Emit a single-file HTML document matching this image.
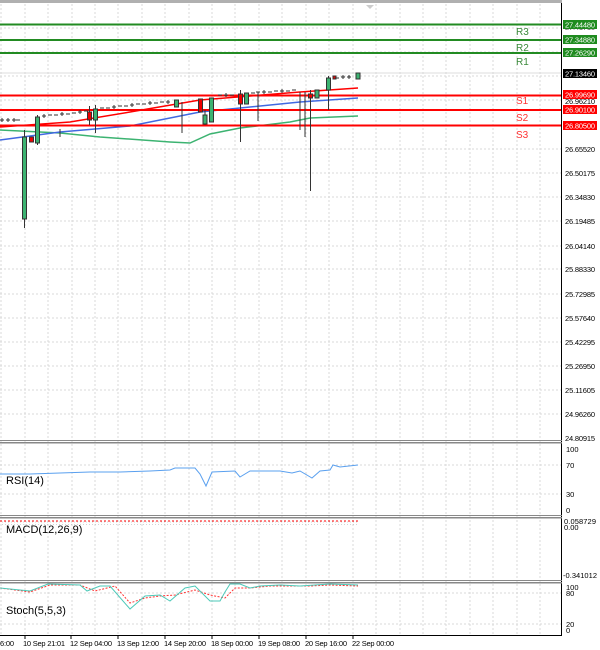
<!DOCTYPE html>
<html><head><meta charset="utf-8"><style>
html,body{margin:0;padding:0;background:#fff;}
svg{display:block;font-family:"Liberation Sans",sans-serif;}
.ax{font-size:7.5px;fill:#000;}
</style></head><body>
<svg width="600" height="650" viewBox="0 0 600 650" xmlns="http://www.w3.org/2000/svg">
<rect width="600" height="650" fill="#fff"/>
<rect x="0" y="0" width="562" height="3" fill="#b0b0b0"/>
<g stroke="#d8d8d8" stroke-dasharray="2,2" stroke-width="1">
<line x1="1" y1="4" x2="1" y2="635"/><line x1="25" y1="4" x2="25" y2="635"/><line x1="48" y1="4" x2="48" y2="635"/><line x1="72" y1="4" x2="72" y2="635"/><line x1="95" y1="4" x2="95" y2="635"/><line x1="118" y1="4" x2="118" y2="635"/><line x1="142" y1="4" x2="142" y2="635"/><line x1="165" y1="4" x2="165" y2="635"/><line x1="189" y1="4" x2="189" y2="635"/><line x1="212" y1="4" x2="212" y2="635"/><line x1="235" y1="4" x2="235" y2="635"/><line x1="259" y1="4" x2="259" y2="635"/><line x1="282" y1="4" x2="282" y2="635"/><line x1="306" y1="4" x2="306" y2="635"/><line x1="329" y1="4" x2="329" y2="635"/><line x1="353" y1="4" x2="353" y2="635"/><line x1="376" y1="4" x2="376" y2="635"/><line x1="400" y1="4" x2="400" y2="635"/><line x1="423" y1="4" x2="423" y2="635"/><line x1="446" y1="4" x2="446" y2="635"/><line x1="470" y1="4" x2="470" y2="635"/><line x1="493" y1="4" x2="493" y2="635"/><line x1="517" y1="4" x2="517" y2="635"/><line x1="540" y1="4" x2="540" y2="635"/>
<line x1="0" y1="28" x2="562" y2="28"/><line x1="0" y1="52" x2="562" y2="52"/><line x1="0" y1="76" x2="562" y2="76"/><line x1="0" y1="100" x2="562" y2="100"/><line x1="0" y1="125" x2="562" y2="125"/><line x1="0" y1="149" x2="562" y2="149"/><line x1="0" y1="173" x2="562" y2="173"/><line x1="0" y1="197" x2="562" y2="197"/><line x1="0" y1="221" x2="562" y2="221"/><line x1="0" y1="246" x2="562" y2="246"/><line x1="0" y1="269" x2="562" y2="269"/><line x1="0" y1="294" x2="562" y2="294"/><line x1="0" y1="318" x2="562" y2="318"/><line x1="0" y1="342" x2="562" y2="342"/><line x1="0" y1="366" x2="562" y2="366"/><line x1="0" y1="390" x2="562" y2="390"/><line x1="0" y1="414" x2="562" y2="414"/>
<line x1="0" y1="465" x2="562" y2="465"/><line x1="0" y1="494" x2="562" y2="494"/>
<line x1="0" y1="593" x2="562" y2="593"/><line x1="0" y1="624" x2="562" y2="624"/>
</g>
<polyline fill="none" stroke="#3cb371" stroke-width="1.5" points="0,130 60,133 100,137 170,142 190,143 210,134 240,128 290,122 310,118 358,116"/>
<polyline fill="none" stroke="#4169e1" stroke-width="1.5" points="0,140 60,132 130,126 200,112 300,102 358,98"/>
<polyline fill="none" stroke="#f00" stroke-width="1.5" points="0,127 70,122 130,112 200,100 300,92 358,88"/>
<g stroke-width="2">
<line x1="0" y1="24.5" x2="562" y2="24.5" stroke="#228b22"/><line x1="0" y1="40" x2="562" y2="40" stroke="#228b22"/><line x1="0" y1="53" x2="562" y2="53" stroke="#228b22"/>
<line x1="0" y1="95.5" x2="562" y2="95.5" stroke="#f00"/><line x1="0" y1="110" x2="562" y2="110" stroke="#f00"/><line x1="0" y1="125.5" x2="562" y2="125.5" stroke="#f00"/>
</g>
<line x1="0" y1="73" x2="562" y2="73" stroke="#ddd"/>
<g stroke="#333" stroke-width="1">
<line x1="24.5" y1="130" x2="24.5" y2="228"/><rect x="22.5" y="137" width="4" height="82" fill="#3cb371"/>
<rect x="29.5" y="137" width="4" height="5" fill="#e00"/>
<line x1="37.5" y1="115" x2="37.5" y2="145"/><rect x="35.5" y="117" width="4" height="26" fill="#3cb371"/>
<line x1="60" y1="129" x2="60" y2="137"/>
<line x1="89.5" y1="106" x2="89.5" y2="125"/><rect x="87.5" y="112" width="4" height="8" fill="#e00"/>
<line x1="95.5" y1="105" x2="95.5" y2="133"/><rect x="93.5" y="109" width="4" height="11" fill="#3cb371"/>
<line x1="182" y1="102" x2="182" y2="133"/><rect x="174.5" y="100" width="4" height="7" fill="#3cb371"/>
<rect x="198.5" y="99" width="4" height="13" fill="#e00"/>
<line x1="205" y1="110" x2="205" y2="125"/><rect x="203" y="115" width="4" height="9" fill="#3cb371"/>
<rect x="209.5" y="98" width="4" height="24" fill="#3cb371"/>
<line x1="240.5" y1="90" x2="240.5" y2="142"/><rect x="238.5" y="94" width="4" height="10" fill="#e00"/>
<rect x="244.5" y="93" width="4" height="11" fill="#3cb371"/>
<line x1="258" y1="92" x2="258" y2="121"/>
<line x1="300" y1="92" x2="300" y2="130"/><line x1="305" y1="92" x2="305" y2="137"/>
<line x1="310.5" y1="90" x2="310.5" y2="191"/><rect x="308.5" y="94" width="4" height="4" fill="#e00"/>
<rect x="315" y="90" width="4" height="8" fill="#3cb371"/>
<line x1="328.5" y1="76" x2="328.5" y2="110"/><rect x="326.5" y="78" width="4" height="12" fill="#3cb371"/>
<rect x="333" y="76" width="3" height="3" fill="#e00"/>
<rect x="356" y="73" width="4" height="6" fill="#3cb371"/>
</g>
<g stroke="#333" stroke-width="1">
<path d="M0 120h4M6 120h4M12 120h4M16 120h4M42 116h4M48 115h4M54 115h4M60 114h4M66 114h4M72 113h4M78 112h4M84 111h4M100 108h4M106 108h4M112 107h4M118 106h4M124 106h4M130 105h4M136 104h4M142 104h4M148 103h4M154 103h4M160 102h4M166 102h4M218 95h4M224 95h4M230 95h4M251 93h4M256 92h4M262 92h4M268 92h4M274 91h4M280 91h4M286 91h4M292 90h4M335 78h4M341 77h4M347 77h4"/>
<path d="M2 118v4M8 118v4M14 118v4M44 114v4M62 112v4M80 110v4M114 105v4M132 103v4M150 101v4M168 100v4M226 93v4M264 90v4M282 89v4M343 75v4M349 75v4"/>
</g>
<g font-size="10">
<text x="516" y="35" fill="#3a8a3a">R3</text><text x="516" y="51" fill="#3a8a3a">R2</text><text x="516" y="65" fill="#3a8a3a">R1</text>
<text x="516" y="104" fill="#f33">S1</text><text x="516" y="121" fill="#f33">S2</text><text x="516" y="138" fill="#f33">S3</text>
</g>
<line x1="561.5" y1="3" x2="561.5" y2="636" stroke="#000"/>
<g class="ax" lengthAdjust="spacingAndGlyphs">
<text x="565" y="30" fill="#555" textLength="30">27.41710</text>
<text x="565" y="77" fill="#555" textLength="30">27.11020</text>
<text x="565" y="104" textLength="30">26.96210</text>
<text x="565" y="152" textLength="30">26.65520</text><text x="565" y="176" textLength="30">26.50175</text><text x="565" y="200" textLength="30">26.34830</text><text x="565" y="224" textLength="30">26.19485</text><text x="565" y="249" textLength="30">26.04140</text><text x="565" y="272" textLength="30">25.88330</text><text x="565" y="297" textLength="30">25.72985</text><text x="565" y="321" textLength="30">25.57640</text><text x="565" y="345" textLength="30">25.42295</text><text x="565" y="369" textLength="30">25.26950</text><text x="565" y="393" textLength="30">25.11605</text><text x="565" y="417" textLength="30">24.96260</text><text x="565" y="441" textLength="30">24.80915</text>
</g>
<g font-size="7.5">
<rect x="563" y="20" width="34" height="9" fill="#1f8b1f"/><text x="565" y="27.5" fill="#fff" textLength="30">27.44480</text>
<rect x="563" y="35" width="34" height="9" fill="#1f8b1f"/><text x="565" y="42.5" fill="#fff" textLength="30">27.34880</text>
<rect x="563" y="48" width="34" height="9" fill="#1f8b1f"/><text x="565" y="55.5" fill="#fff" textLength="30">27.26290</text>
<rect x="563" y="69" width="34" height="9" fill="#000"/><text x="565" y="76.5" fill="#fff" textLength="30">27.13460</text>
<rect x="563" y="90" width="34" height="9" fill="#f00"/><text x="565" y="97.5" fill="#fff" textLength="30">26.99690</text>
<rect x="563" y="105" width="34" height="9" fill="#f00"/><text x="565" y="112.5" fill="#fff" textLength="30">26.90100</text>
<rect x="563" y="121" width="34" height="9" fill="#f00"/><text x="565" y="128.5" fill="#fff" textLength="30">26.80500</text>
</g>
<g fill="#888"><rect x="0" y="440" width="562" height="1"/><rect x="0" y="442" width="562" height="1.5"/>
<rect x="0" y="515" width="562" height="1"/><rect x="0" y="517" width="562" height="1.5"/>
<rect x="0" y="580" width="562" height="1"/><rect x="0" y="582" width="562" height="1.5"/></g>
<line x1="0" y1="635.5" x2="562" y2="635.5" stroke="#000"/>
<polyline fill="none" stroke="#5aa0ef" stroke-width="1" points="0,474 30,474 60,473 90,472 120,472 150,471 170,470 175,468 195,468 200,474 206,486 212,472 235,471 240,477 250,471 280,471 292,473 300,471 312,478 320,471 330,470 333,465 340,467 358,465"/>
<text x="6" y="484" font-size="11">RSI(14)</text>
<g class="ax"><text x="566" y="452">100</text><text x="566" y="468">70</text><text x="566" y="497">30</text><text x="566" y="513">0</text></g>
<line x1="0" y1="521" x2="358" y2="521" stroke="#f00" stroke-dasharray="2,2"/>
<g stroke="#aaa" stroke-width="0.6"><line x1="2" y1="522" x2="358" y2="522" stroke-dasharray="1,2"/><line x1="2" y1="524.5" x2="358" y2="524.5" stroke-dasharray="1,2"/></g>
<text x="6" y="533" font-size="11">MACD(12,26,9)</text>
<g class="ax"><text x="564" y="524" textLength="32">0.058729</text><text x="564" y="530">0.00</text><text x="563" y="578" textLength="34">-0.341012</text></g>
<polyline fill="none" stroke="#f33" stroke-width="1" stroke-dasharray="2,1.5" points="0,588 30,592 50,585 80,585 95,591 115,586 130,603 145,598 160,596 175,595 195,590 210,595 225,598 235,588 250,588 270,586 290,586 310,586 330,585 358,586"/>
<polyline fill="none" stroke="#4cc9b8" stroke-width="1" points="0,588 30,591 48,584 80,585 87,591 100,586 110,586 130,609 145,596 160,595 170,601 185,588 195,586 210,601 220,601 225,592 230,584 240,584 250,588 260,586 280,585 300,586 330,584 358,585"/>
<text x="6" y="614" font-size="11">Stoch(5,5,3)</text>
<g class="ax"><text x="566" y="590">100</text><text x="566" y="596">80</text><text x="566" y="627">20</text><text x="566" y="633">0</text></g>
<g stroke="#000"><line x1="25" y1="636" x2="25" y2="639"/><line x1="71" y1="636" x2="71" y2="639"/><line x1="118" y1="636" x2="118" y2="639"/><line x1="165" y1="636" x2="165" y2="639"/><line x1="212" y1="636" x2="212" y2="639"/><line x1="259" y1="636" x2="259" y2="639"/><line x1="306" y1="636" x2="306" y2="639"/><line x1="353" y1="636" x2="353" y2="639"/></g>
<g class="ax" font-size="7">
<text x="0" y="646" textLength="14">6:00</text><text x="23" y="646" textLength="42">10 Sep 21:01</text><text x="70" y="646" textLength="42">12 Sep 04:00</text><text x="117" y="646" textLength="42">13 Sep 12:00</text><text x="164" y="646" textLength="42">14 Sep 20:00</text><text x="211" y="646" textLength="42">18 Sep 00:00</text><text x="258" y="646" textLength="42">19 Sep 08:00</text><text x="305" y="646" textLength="42">20 Sep 16:00</text><text x="352" y="646" textLength="42">22 Sep 00:00</text>
</g>
<path d="M366 5l4 4 4-4z" fill="#ccc"/>
</svg>
</body></html>
